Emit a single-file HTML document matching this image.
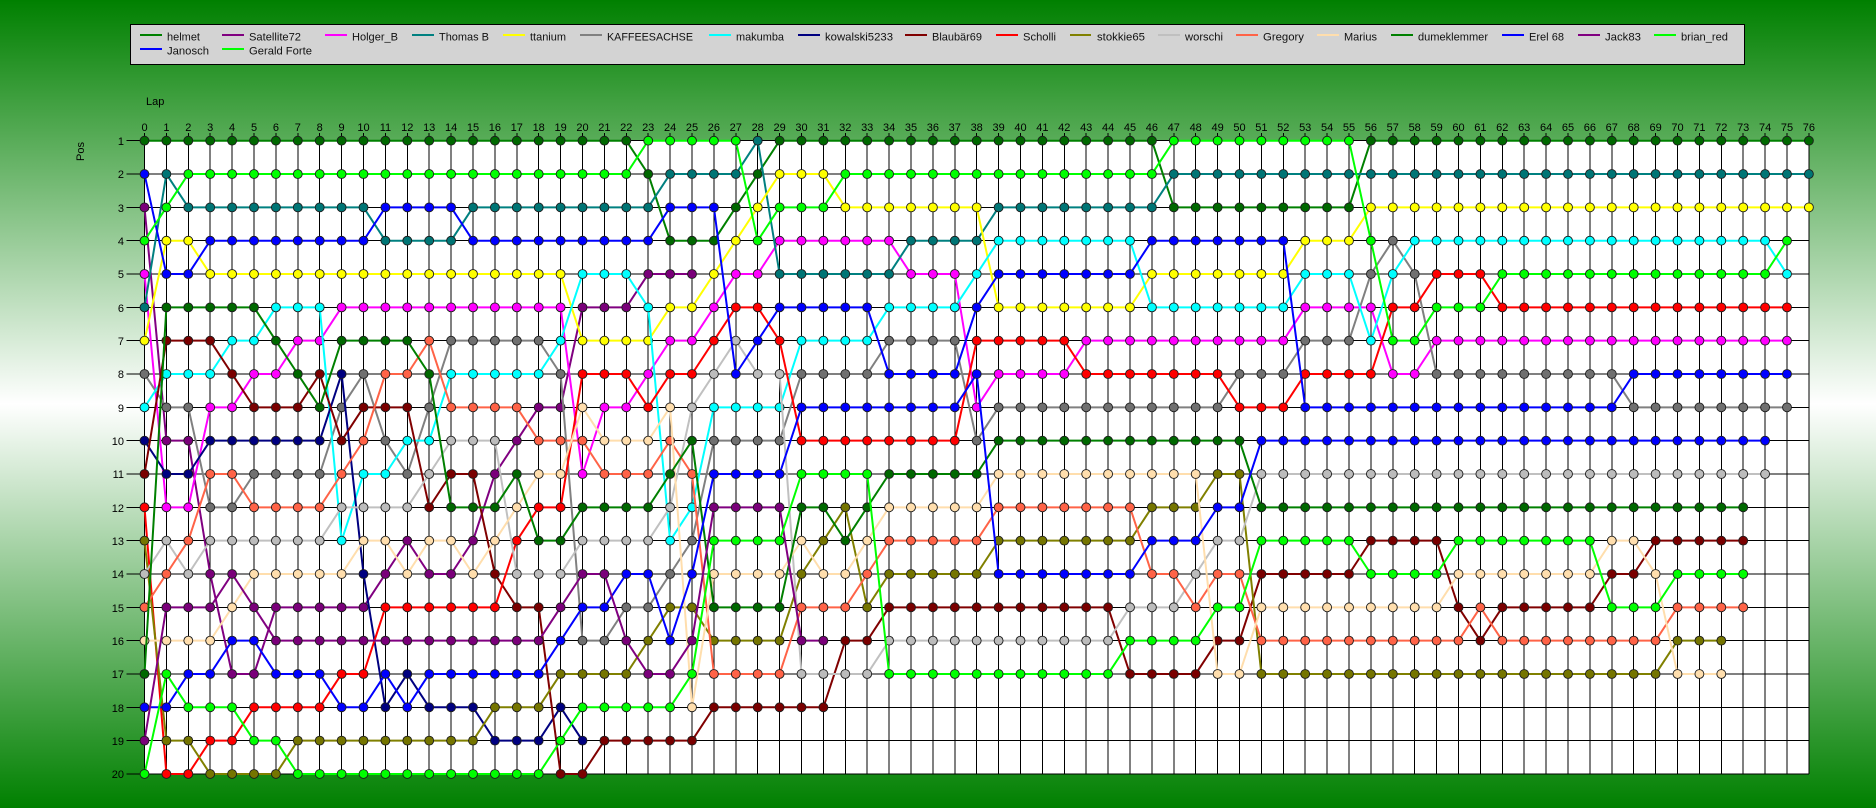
<!DOCTYPE html>
<html><head><meta charset="utf-8"><title>Race chart</title>
<style>
html,body{margin:0;padding:0;width:1876px;height:808px;overflow:hidden;background:linear-gradient(#008000,#fff 50%,#008000)}
svg{display:block;font-family:"Liberation Sans",sans-serif;font-size:11px;fill:#000}
marker{overflow:visible}
polyline{fill:none;stroke-width:2;stroke-linejoin:round;vector-effect:non-scaling-stroke}
.g{stroke:#008000;marker:url(#g)}.p{stroke:#800080;marker:url(#p)}.m{stroke:#f0f;marker:url(#m)}.t{stroke:#008080;marker:url(#t)}
.y{stroke:#ff0;marker:url(#y)}.a{stroke:#808080;marker:url(#a)}.c{stroke:#0ff;marker:url(#c)}.n{stroke:#000080;marker:url(#n)}
.r{stroke:#800000;marker:url(#r)}.d{stroke:#f00;marker:url(#d)}.o{stroke:#808000;marker:url(#o)}.s{stroke:#c0c0c0;marker:url(#s)}
.k{stroke:#ff6347;marker:url(#k)}.w{stroke:#ffdead;marker:url(#w)}.b{stroke:#00f;marker:url(#b)}.l{stroke:#0f0;marker:url(#l)}
.x text{text-anchor:middle}
.v text{text-anchor:end}
</style></head><body>
<svg width="1876" height="808" viewBox="0 0 1876 808" xmlns="http://www.w3.org/2000/svg">
<defs>
<marker id="g" markerUnits="userSpaceOnUse" markerWidth="1" markerHeight="1"><ellipse rx=".2238" ry=".147" fill="#1c1c1c"/><ellipse rx=".1826" ry=".12" fill="#006800"/></marker>
<marker id="p" markerUnits="userSpaceOnUse" markerWidth="1" markerHeight="1"><ellipse rx=".2238" ry=".147" fill="#1c1c1c"/><ellipse rx=".1826" ry=".12" fill="#7a007a"/></marker>
<marker id="m" markerUnits="userSpaceOnUse" markerWidth="1" markerHeight="1"><ellipse rx=".2238" ry=".147" fill="#1c1c1c"/><ellipse rx=".1826" ry=".12" fill="#f0f"/></marker>
<marker id="t" markerUnits="userSpaceOnUse" markerWidth="1" markerHeight="1"><ellipse rx=".2238" ry=".147" fill="#1c1c1c"/><ellipse rx=".1826" ry=".12" fill="#007575"/></marker>
<marker id="y" markerUnits="userSpaceOnUse" markerWidth="1" markerHeight="1"><ellipse rx=".2238" ry=".147" fill="#1c1c1c"/><ellipse rx=".1826" ry=".12" fill="#ff0"/></marker>
<marker id="a" markerUnits="userSpaceOnUse" markerWidth="1" markerHeight="1"><ellipse rx=".2238" ry=".147" fill="#1c1c1c"/><ellipse rx=".1826" ry=".12" fill="#707070"/></marker>
<marker id="c" markerUnits="userSpaceOnUse" markerWidth="1" markerHeight="1"><ellipse rx=".2238" ry=".147" fill="#1c1c1c"/><ellipse rx=".1826" ry=".12" fill="#0ff"/></marker>
<marker id="n" markerUnits="userSpaceOnUse" markerWidth="1" markerHeight="1"><ellipse rx=".2238" ry=".147" fill="#1c1c1c"/><ellipse rx=".1826" ry=".12" fill="#000080"/></marker>
<marker id="r" markerUnits="userSpaceOnUse" markerWidth="1" markerHeight="1"><ellipse rx=".2238" ry=".147" fill="#1c1c1c"/><ellipse rx=".1826" ry=".12" fill="#7a0000"/></marker>
<marker id="d" markerUnits="userSpaceOnUse" markerWidth="1" markerHeight="1"><ellipse rx=".2238" ry=".147" fill="#1c1c1c"/><ellipse rx=".1826" ry=".12" fill="#f00"/></marker>
<marker id="o" markerUnits="userSpaceOnUse" markerWidth="1" markerHeight="1"><ellipse rx=".2238" ry=".147" fill="#1c1c1c"/><ellipse rx=".1826" ry=".12" fill="#757500"/></marker>
<marker id="s" markerUnits="userSpaceOnUse" markerWidth="1" markerHeight="1"><ellipse rx=".2238" ry=".147" fill="#1c1c1c"/><ellipse rx=".1826" ry=".12" fill="#bcbcbc"/></marker>
<marker id="k" markerUnits="userSpaceOnUse" markerWidth="1" markerHeight="1"><ellipse rx=".2238" ry=".147" fill="#1c1c1c"/><ellipse rx=".1826" ry=".12" fill="#ff6347"/></marker>
<marker id="w" markerUnits="userSpaceOnUse" markerWidth="1" markerHeight="1"><ellipse rx=".2238" ry=".147" fill="#1c1c1c"/><ellipse rx=".1826" ry=".12" fill="#ffdead"/></marker>
<marker id="b" markerUnits="userSpaceOnUse" markerWidth="1" markerHeight="1"><ellipse rx=".2238" ry=".147" fill="#1c1c1c"/><ellipse rx=".1826" ry=".12" fill="#00f"/></marker>
<marker id="l" markerUnits="userSpaceOnUse" markerWidth="1" markerHeight="1"><ellipse rx=".2238" ry=".147" fill="#1c1c1c"/><ellipse rx=".1826" ry=".12" fill="#0f0"/></marker>
</defs>

<!-- legend -->
<rect x="130.5" y="24.5" width="1614" height="40" fill="#d3d3d3" stroke="#000"/>
<g stroke-width="2" fill="none">
<path d="M140 35H162" stroke="#008000"/><path d="M222 35H244" stroke="#800080"/><path d="M325 35H347" stroke="#f0f"/><path d="M412 35H434" stroke="#008080"/><path d="M503 35H525" stroke="#ff0"/><path d="M580 35H602" stroke="#808080"/><path d="M709 35H731" stroke="#0ff"/><path d="M798 35H820" stroke="#000080"/><path d="M905 35H927" stroke="#800000"/><path d="M996 35H1018" stroke="#f00"/><path d="M1070 35H1091" stroke="#808000"/><path d="M1158 35H1180" stroke="#c0c0c0"/><path d="M1236 35H1258" stroke="#ff6347"/><path d="M1317 35H1339" stroke="#ffdead"/><path d="M1391 35H1413" stroke="#008000"/><path d="M1502 35H1524" stroke="#00f"/><path d="M1578 35H1600" stroke="#800080"/><path d="M1654 35H1676" stroke="#0f0"/>
<path d="M140 49H162" stroke="#00f"/><path d="M222 49H244" stroke="#0f0"/>
</g>
<g fill="#111">
<text x="167" y="40.5" textLength="33" lengthAdjust="spacingAndGlyphs">helmet</text>
<text x="249" y="40.5" textLength="52" lengthAdjust="spacingAndGlyphs">Satellite72</text>
<text x="352" y="40.5" textLength="46" lengthAdjust="spacingAndGlyphs">Holger_B</text>
<text x="439" y="40.5" textLength="50" lengthAdjust="spacingAndGlyphs">Thomas B</text>
<text x="530" y="40.5" textLength="36" lengthAdjust="spacingAndGlyphs">ttanium</text>
<text x="607" y="40.5" textLength="86" lengthAdjust="spacingAndGlyphs">KAFFEESACHSE</text>
<text x="736" y="40.5" textLength="48" lengthAdjust="spacingAndGlyphs">makumba</text>
<text x="825" y="40.5" textLength="68" lengthAdjust="spacingAndGlyphs">kowalski5233</text>
<text x="932" y="40.5" textLength="50" lengthAdjust="spacingAndGlyphs">Blaubär69</text>
<text x="1023" y="40.5" textLength="33" lengthAdjust="spacingAndGlyphs">Scholli</text>
<text x="1097" y="40.5" textLength="48" lengthAdjust="spacingAndGlyphs">stokkie65</text>
<text x="1185" y="40.5" textLength="38" lengthAdjust="spacingAndGlyphs">worschi</text>
<text x="1263" y="40.5" textLength="41" lengthAdjust="spacingAndGlyphs">Gregory</text>
<text x="1344" y="40.5" textLength="33" lengthAdjust="spacingAndGlyphs">Marius</text>
<text x="1418" y="40.5" textLength="70" lengthAdjust="spacingAndGlyphs">dumeklemmer</text>
<text x="1529" y="40.5" textLength="35" lengthAdjust="spacingAndGlyphs">Erel 68</text>
<text x="1605" y="40.5" textLength="36" lengthAdjust="spacingAndGlyphs">Jack83</text>
<text x="1681" y="40.5" textLength="47" lengthAdjust="spacingAndGlyphs">brian_red</text>
<text x="167" y="54.5" textLength="42" lengthAdjust="spacingAndGlyphs">Janosch</text>
<text x="249" y="54.5" textLength="63" lengthAdjust="spacingAndGlyphs">Gerald Forte</text>
</g>

<!-- axis titles -->
<text x="146" y="105">Lap</text>
<text transform="translate(84,161) rotate(-90)">Pos</text>

<!-- x axis labels -->
<g class="x">
<text x="144.5" y="131">0</text><text x="166.4" y="131">1</text><text x="188.3" y="131">2</text><text x="210.2" y="131">3</text><text x="232.1" y="131">4</text><text x="254" y="131">5</text><text x="275.9" y="131">6</text><text x="297.8" y="131">7</text><text x="319.7" y="131">8</text><text x="341.6" y="131">9</text>
<text x="363.5" y="131">10</text><text x="385.4" y="131">11</text><text x="407.3" y="131">12</text><text x="429.2" y="131">13</text><text x="451.1" y="131">14</text><text x="473" y="131">15</text><text x="494.9" y="131">16</text><text x="516.8" y="131">17</text><text x="538.7" y="131">18</text><text x="560.6" y="131">19</text>
<text x="582.5" y="131">20</text><text x="604.4" y="131">21</text><text x="626.3" y="131">22</text><text x="648.2" y="131">23</text><text x="670.1" y="131">24</text><text x="692" y="131">25</text><text x="713.9" y="131">26</text><text x="735.8" y="131">27</text><text x="757.7" y="131">28</text><text x="779.6" y="131">29</text>
<text x="801.5" y="131">30</text><text x="823.4" y="131">31</text><text x="845.3" y="131">32</text><text x="867.2" y="131">33</text><text x="889.1" y="131">34</text><text x="911" y="131">35</text><text x="932.9" y="131">36</text><text x="954.8" y="131">37</text><text x="976.7" y="131">38</text><text x="998.6" y="131">39</text>
<text x="1020.5" y="131">40</text><text x="1042.4" y="131">41</text><text x="1064.3" y="131">42</text><text x="1086.2" y="131">43</text><text x="1108.1" y="131">44</text><text x="1130" y="131">45</text><text x="1151.9" y="131">46</text><text x="1173.8" y="131">47</text><text x="1195.7" y="131">48</text><text x="1217.6" y="131">49</text>
<text x="1239.5" y="131">50</text><text x="1261.4" y="131">51</text><text x="1283.3" y="131">52</text><text x="1305.2" y="131">53</text><text x="1327.1" y="131">54</text><text x="1349" y="131">55</text><text x="1370.9" y="131">56</text><text x="1392.8" y="131">57</text><text x="1414.7" y="131">58</text><text x="1436.6" y="131">59</text>
<text x="1458.5" y="131">60</text><text x="1480.4" y="131">61</text><text x="1502.3" y="131">62</text><text x="1524.2" y="131">63</text><text x="1546.1" y="131">64</text><text x="1568" y="131">65</text><text x="1589.9" y="131">66</text><text x="1611.8" y="131">67</text><text x="1633.7" y="131">68</text><text x="1655.6" y="131">69</text>
<text x="1677.5" y="131">70</text><text x="1699.4" y="131">71</text><text x="1721.3" y="131">72</text><text x="1743.2" y="131">73</text><text x="1765.1" y="131">74</text><text x="1787" y="131">75</text><text x="1808.9" y="131">76</text>
</g>

<!-- y axis labels -->
<g class="v">
<text x="124" y="145">1</text><text x="124" y="178">2</text><text x="124" y="212">3</text><text x="124" y="245">4</text><text x="124" y="278">5</text><text x="124" y="312">6</text><text x="124" y="345">7</text><text x="124" y="378">8</text><text x="124" y="412">9</text><text x="124" y="445">10</text><text x="124" y="478">11</text><text x="124" y="512">12</text><text x="124" y="545">13</text><text x="124" y="578">14</text><text x="124" y="612">15</text><text x="124" y="645">16</text><text x="124" y="678">17</text><text x="124" y="712">18</text><text x="124" y="745">19</text><text x="124" y="778">20</text>
</g>

<!-- plot in lap/position units -->
<g transform="translate(144.5,107.37) scale(21.9,33.33)">
<rect x="0" y="1" width="76" height="19" fill="#fff"/>
<path fill="none" stroke="#000" stroke-width="1" vector-effect="non-scaling-stroke" shape-rendering="crispEdges" d="M-.822 1H76M-.822 2H76M-.822 3H76M-.822 4H76M-.822 5H76M-.822 6H76M-.822 7H76M-.822 8H76M-.822 9H76M-.822 10H76M-.822 11H76M-.822 12H76M-.822 13H76M-.822 14H76M-.822 15H76M-.822 16H76M-.822 17H76M-.822 18H76M-.822 19H76M-.822 20H76
M0 .77V20M1 .77V20M2 .77V20M3 .77V20M4 .77V20M5 .77V20M6 .77V20M7 .77V20M8 .77V20M9 .77V20M10 .77V20M11 .77V20M12 .77V20M13 .77V20M14 .77V20M15 .77V20M16 .77V20M17 .77V20M18 .77V20M19 .77V20M20 .77V20M21 .77V20M22 .77V20M23 .77V20M24 .77V20M25 .77V20M26 .77V20M27 .77V20M28 .77V20M29 .77V20M30 .77V20M31 .77V20M32 .77V20M33 .77V20M34 .77V20M35 .77V20M36 .77V20M37 .77V20M38 .77V20M39 .77V20M40 .77V20M41 .77V20M42 .77V20M43 .77V20M44 .77V20M45 .77V20M46 .77V20M47 .77V20M48 .77V20M49 .77V20M50 .77V20M51 .77V20M52 .77V20M53 .77V20M54 .77V20M55 .77V20M56 .77V20M57 .77V20M58 .77V20M59 .77V20M60 .77V20M61 .77V20M62 .77V20M63 .77V20M64 .77V20M65 .77V20M66 .77V20M67 .77V20M68 .77V20M69 .77V20M70 .77V20M71 .77V20M72 .77V20M73 .77V20M74 .77V20M75 .77V20M76 .77V20"/>

<!-- helmet -->
<polyline class="g" points="0,1 1,1 2,1 3,1 4,1 5,1 6,1 7,1 8,1 9,1 10,1 11,1 12,1 13,1 14,1 15,1 16,1 17,1 18,1 19,1 20,1 21,1 22,1 23,2 24,4 25,4 26,4 27,3 28,2 29,1 30,1 31,1 32,1 33,1 34,1 35,1 36,1 37,1 38,1 39,1 40,1 41,1 42,1 43,1 44,1 45,1 46,1 47,3 48,3 49,3 50,3 51,3 52,3 53,3 54,3 55,3 56,1 57,1 58,1 59,1 60,1 61,1 62,1 63,1 64,1 65,1 66,1 67,1 68,1 69,1 70,1 71,1 72,1 73,1 74,1 75,1 76,1"/>
<!-- Satellite72 -->
<polyline class="p" points="0,3 1,10 2,10 3,14 4,17 5,17 6,15 7,15 8,15 9,15 10,15 11,14 12,13 13,14 14,14 15,13 16,11 17,10 18,9 19,9 20,6 21,6 22,6 23,5 24,5 25,5"/>
<!-- Holger_B -->
<polyline class="m" points="0,5 1,12 2,12 3,9 4,9 5,8 6,8 7,7 8,7 9,6 10,6 11,6 12,6 13,6 14,6 15,6 16,6 17,6 18,6 19,6 20,11 21,9 22,9 23,8 24,7 25,7 26,6 27,5 28,5 29,4 30,4 31,4 32,4 33,4 34,4 35,5 36,5 37,5 38,9 39,8 40,8 41,8 42,8 43,7 44,7 45,7 46,7 47,7 48,7 49,7 50,7 51,7 52,7 53,6 54,6 55,6 56,6 57,8 58,8 59,7 60,7 61,7 62,7 63,7 64,7 65,7 66,7 67,7 68,7 69,7 70,7 71,7 72,7 73,7 74,7 75,7"/>
<!-- Thomas B -->
<polyline class="t" points="0,6 1,2 2,3 3,3 4,3 5,3 6,3 7,3 8,3 9,3 10,3 11,4 12,4 13,4 14,4 15,3 16,3 17,3 18,3 19,3 20,3 21,3 22,3 23,3 24,2 25,2 26,2 27,2 28,1 29,5 30,5 31,5 32,5 33,5 34,5 35,4 36,4 37,4 38,4 39,3 40,3 41,3 42,3 43,3 44,3 45,3 46,3 47,2 48,2 49,2 50,2 51,2 52,2 53,2 54,2 55,2 56,2 57,2 58,2 59,2 60,2 61,2 62,2 63,2 64,2 65,2 66,2 67,2 68,2 69,2 70,2 71,2 72,2 73,2 74,2 75,2 76,2"/>
<!-- ttanium -->
<polyline class="y" points="0,7 1,4 2,4 3,5 4,5 5,5 6,5 7,5 8,5 9,5 10,5 11,5 12,5 13,5 14,5 15,5 16,5 17,5 18,5 19,5 20,7 21,7 22,7 23,7 24,6 25,6 26,5 27,4 28,3 29,2 30,2 31,2 32,3 33,3 34,3 35,3 36,3 37,3 38,3 39,6 40,6 41,6 42,6 43,6 44,6 45,6 46,5 47,5 48,5 49,5 50,5 51,5 52,5 53,4 54,4 55,4 56,3 57,3 58,3 59,3 60,3 61,3 62,3 63,3 64,3 65,3 66,3 67,3 68,3 69,3 70,3 71,3 72,3 73,3 74,3 75,3 76,3"/>
<!-- KAFFEESACHSE -->
<polyline class="a" points="0,8 1,9 2,9 3,12 4,12 5,11 6,11 7,11 8,11 9,9 10,8 11,10 12,11 13,9 14,7 15,7 16,7 17,7 18,7 19,8 20,16 21,16 22,15 23,15 24,14 25,13 26,10 27,10 28,10 29,10 30,8 31,8 32,8 33,8 34,7 35,7 36,7 37,7 38,10 39,9 40,9 41,9 42,9 43,9 44,9 45,9 46,9 47,9 48,9 49,9 50,8 51,8 52,8 53,7 54,7 55,7 56,5 57,4 58,5 59,8 60,8 61,8 62,8 63,8 64,8 65,8 66,8 67,8 68,9 69,9 70,9 71,9 72,9 73,9 74,9 75,9"/>
<!-- makumba -->
<polyline class="c" points="0,9 1,8 2,8 3,8 4,7 5,7 6,6 7,6 8,6 9,13 10,11 11,11 12,10 13,10 14,8 15,8 16,8 17,8 18,8 19,7 20,5 21,5 22,5 23,6 24,13 25,12 26,9 27,9 28,9 29,9 30,7 31,7 32,7 33,7 34,6 35,6 36,6 37,6 38,5 39,4 40,4 41,4 42,4 43,4 44,4 45,4 46,6 47,6 48,6 49,6 50,6 51,6 52,6 53,5 54,5 55,5 56,7 57,5 58,4 59,4 60,4 61,4 62,4 63,4 64,4 65,4 66,4 67,4 68,4 69,4 70,4 71,4 72,4 73,4 74,4 75,5"/>
<!-- kowalski5233 -->
<polyline class="n" points="0,10 1,11 2,11 3,10 4,10 5,10 6,10 7,10 8,10 9,8 10,14 11,18 12,17 13,18 14,18 15,18 16,19 17,19 18,19 19,18 20,19"/>
<!-- Blaubär69 -->
<polyline class="r" points="0,11 1,7 2,7 3,7 4,8 5,9 6,9 7,9 8,8 9,10 10,9 11,9 12,9 13,12 14,11 15,11 16,14 17,15 18,15 19,20 20,20 21,19 22,19 23,19 24,19 25,19 26,18 27,18 28,18 29,18 30,18 31,18 32,16 33,16 34,15 35,15 36,15 37,15 38,15 39,15 40,15 41,15 42,15 43,15 44,15 45,17 46,17 47,17 48,17 49,16 50,16 51,14 52,14 53,14 54,14 55,14 56,13 57,13 58,13 59,13 60,15 61,16 62,15 63,15 64,15 65,15 66,15 67,14 68,14 69,13 70,13 71,13 72,13 73,13"/>
<!-- Scholli -->
<polyline class="d" points="0,12 1,20 2,20 3,19 4,19 5,18 6,18 7,18 8,18 9,17 10,17 11,15 12,15 13,15 14,15 15,15 16,15 17,13 18,12 19,12 20,8 21,8 22,8 23,9 24,8 25,8 26,7 27,6 28,6 29,7 30,10 31,10 32,10 33,10 34,10 35,10 36,10 37,10 38,7 39,7 40,7 41,7 42,7 43,8 44,8 45,8 46,8 47,8 48,8 49,8 50,9 51,9 52,9 53,8 54,8 55,8 56,8 57,6 58,6 59,5 60,5 61,5 62,6 63,6 64,6 65,6 66,6 67,6 68,6 69,6 70,6 71,6 72,6 73,6 74,6 75,6"/>
<!-- stokkie65 -->
<polyline class="o" points="0,13 1,19 2,19 3,20 4,20 5,20 6,20 7,19 8,19 9,19 10,19 11,19 12,19 13,19 14,19 15,19 16,18 17,18 18,18 19,17 20,17 21,17 22,17 23,16 24,15 25,15 26,16 27,16 28,16 29,16 30,14 31,13 32,12 33,15 34,14 35,14 36,14 37,14 38,14 39,13 40,13 41,13 42,13 43,13 44,13 45,13 46,12 47,12 48,12 49,11 50,11 51,17 52,17 53,17 54,17 55,17 56,17 57,17 58,17 59,17 60,17 61,17 62,17 63,17 64,17 65,17 66,17 67,17 68,17 69,17 70,16 71,16 72,16"/>
<!-- worschi -->
<polyline class="s" points="0,14 1,13 2,14 3,13 4,13 5,13 6,13 7,13 8,13 9,12 10,12 11,12 12,12 13,11 14,10 15,10 16,10 17,14 18,14 19,14 20,13 21,13 22,13 23,13 24,12 25,9 26,8 27,7 28,8 29,8 30,17 31,17 32,17 33,17 34,16 35,16 36,16 37,16 38,16 39,16 40,16 41,16 42,16 43,16 44,16 45,15 46,15 47,15 48,14 49,13 50,13 51,11 52,11 53,11 54,11 55,11 56,11 57,11 58,11 59,11 60,11 61,11 62,11 63,11 64,11 65,11 66,11 67,11 68,11 69,11 70,11 71,11 72,11 73,11 74,11"/>
<!-- Gregory -->
<polyline class="k" points="0,15 1,14 2,13 3,11 4,11 5,12 6,12 7,12 8,12 9,11 10,10 11,8 12,8 13,7 14,9 15,9 16,9 17,9 18,10 19,10 20,10 21,11 22,11 23,11 24,10 25,11 26,17 27,17 28,17 29,17 30,15 31,15 32,15 33,14 34,13 35,13 36,13 37,13 38,13 39,12 40,12 41,12 42,12 43,12 44,12 45,12 46,14 47,14 48,15 49,14 50,14 51,16 52,16 53,16 54,16 55,16 56,16 57,16 58,16 59,16 60,16 61,15 62,16 63,16 64,16 65,16 66,16 67,16 68,16 69,16 70,15 71,15 72,15 73,15"/>
<!-- Marius -->
<polyline class="w" points="0,16 1,16 2,16 3,16 4,15 5,14 6,14 7,14 8,14 9,14 10,13 11,13 12,14 13,13 14,13 15,14 16,13 17,12 18,11 19,11 20,9 21,10 22,10 23,10 24,9 25,18 26,14 27,14 28,14 29,14 30,13 31,14 32,14 33,13 34,12 35,12 36,12 37,12 38,12 39,11 40,11 41,11 42,11 43,11 44,11 45,11 46,11 47,11 48,11 49,17 50,17 51,15 52,15 53,15 54,15 55,15 56,15 57,15 58,15 59,15 60,14 61,14 62,14 63,14 64,14 65,14 66,14 67,13 68,13 69,14 70,17 71,17 72,17"/>
<!-- dumeklemmer -->
<polyline class="g" points="0,17 1,6 2,6 3,6 4,6 5,6 6,7 7,8 8,9 9,7 10,7 11,7 12,7 13,8 14,12 15,12 16,12 17,11 18,13 19,13 20,12 21,12 22,12 23,12 24,11 25,10 26,15 27,15 28,15 29,15 30,12 31,12 32,13 33,12 34,11 35,11 36,11 37,11 38,11 39,10 40,10 41,10 42,10 43,10 44,10 45,10 46,10 47,10 48,10 49,10 50,10 51,12 52,12 53,12 54,12 55,12 56,12 57,12 58,12 59,12 60,12 61,12 62,12 63,12 64,12 65,12 66,12 67,12 68,12 69,12 70,12 71,12 72,12 73,12"/>
<!-- Erel 68 -->
<polyline class="b" points="0,18 1,18 2,17 3,17 4,16 5,16 6,17 7,17 8,17 9,18 10,18 11,17 12,18 13,17 14,17 15,17 16,17 17,17 18,17 19,16 20,15 21,15 22,14 23,14 24,16 25,14 26,11 27,11 28,11 29,11 30,9 31,9 32,9 33,9 34,9 35,9 36,9 37,9 38,8 39,14 40,14 41,14 42,14 43,14 44,14 45,14 46,13 47,13 48,13 49,12 50,12 51,10 52,10 53,10 54,10 55,10 56,10 57,10 58,10 59,10 60,10 61,10 62,10 63,10 64,10 65,10 66,10 67,10 68,10 69,10 70,10 71,10 72,10 73,10 74,10"/>
<!-- Jack83 -->
<polyline class="p" points="0,19 1,15 2,15 3,15 4,14 5,15 6,16 7,16 8,16 9,16 10,16 11,16 12,16 13,16 14,16 15,16 16,16 17,16 18,16 19,15 20,14 21,14 22,16 23,17 24,17 25,16 26,12 27,12 28,12 29,12 30,16 31,16"/>
<!-- brian_red -->
<polyline class="l" points="0,20 1,17 2,18 3,18 4,18 5,19 6,19 7,20 8,20 9,20 10,20 11,20 12,20 13,20 14,20 15,20 16,20 17,20 18,20 19,19 20,18 21,18 22,18 23,18 24,18 25,17 26,13 27,13 28,13 29,13 30,11 31,11 32,11 33,11 34,17 35,17 36,17 37,17 38,17 39,17 40,17 41,17 42,17 43,17 44,17 45,16 46,16 47,16 48,16 49,15 50,15 51,13 52,13 53,13 54,13 55,13 56,14 57,14 58,14 59,14 60,13 61,13 62,13 63,13 64,13 65,13 66,13 67,15 68,15 69,15 70,14 71,14 72,14 73,14"/>
<!-- Janosch -->
<polyline class="b" points="0,2 1,5 2,5 3,4 4,4 5,4 6,4 7,4 8,4 9,4 10,4 11,3 12,3 13,3 14,3 15,4 16,4 17,4 18,4 19,4 20,4 21,4 22,4 23,4 24,3 25,3 26,3 27,8 28,7 29,6 30,6 31,6 32,6 33,6 34,8 35,8 36,8 37,8 38,6 39,5 40,5 41,5 42,5 43,5 44,5 45,5 46,4 47,4 48,4 49,4 50,4 51,4 52,4 53,9 54,9 55,9 56,9 57,9 58,9 59,9 60,9 61,9 62,9 63,9 64,9 65,9 66,9 67,9 68,8 69,8 70,8 71,8 72,8 73,8 74,8 75,8"/>
<!-- Gerald Forte -->
<polyline class="l" points="0,4 1,3 2,2 3,2 4,2 5,2 6,2 7,2 8,2 9,2 10,2 11,2 12,2 13,2 14,2 15,2 16,2 17,2 18,2 19,2 20,2 21,2 22,2 23,1 24,1 25,1 26,1 27,1 28,4 29,3 30,3 31,3 32,2 33,2 34,2 35,2 36,2 37,2 38,2 39,2 40,2 41,2 42,2 43,2 44,2 45,2 46,2 47,1 48,1 49,1 50,1 51,1 52,1 53,1 54,1 55,1 56,4 57,7 58,7 59,6 60,6 61,6 62,5 63,5 64,5 65,5 66,5 67,5 68,5 69,5 70,5 71,5 72,5 73,5 74,5 75,4"/>
</g>
</svg>
</body></html>
